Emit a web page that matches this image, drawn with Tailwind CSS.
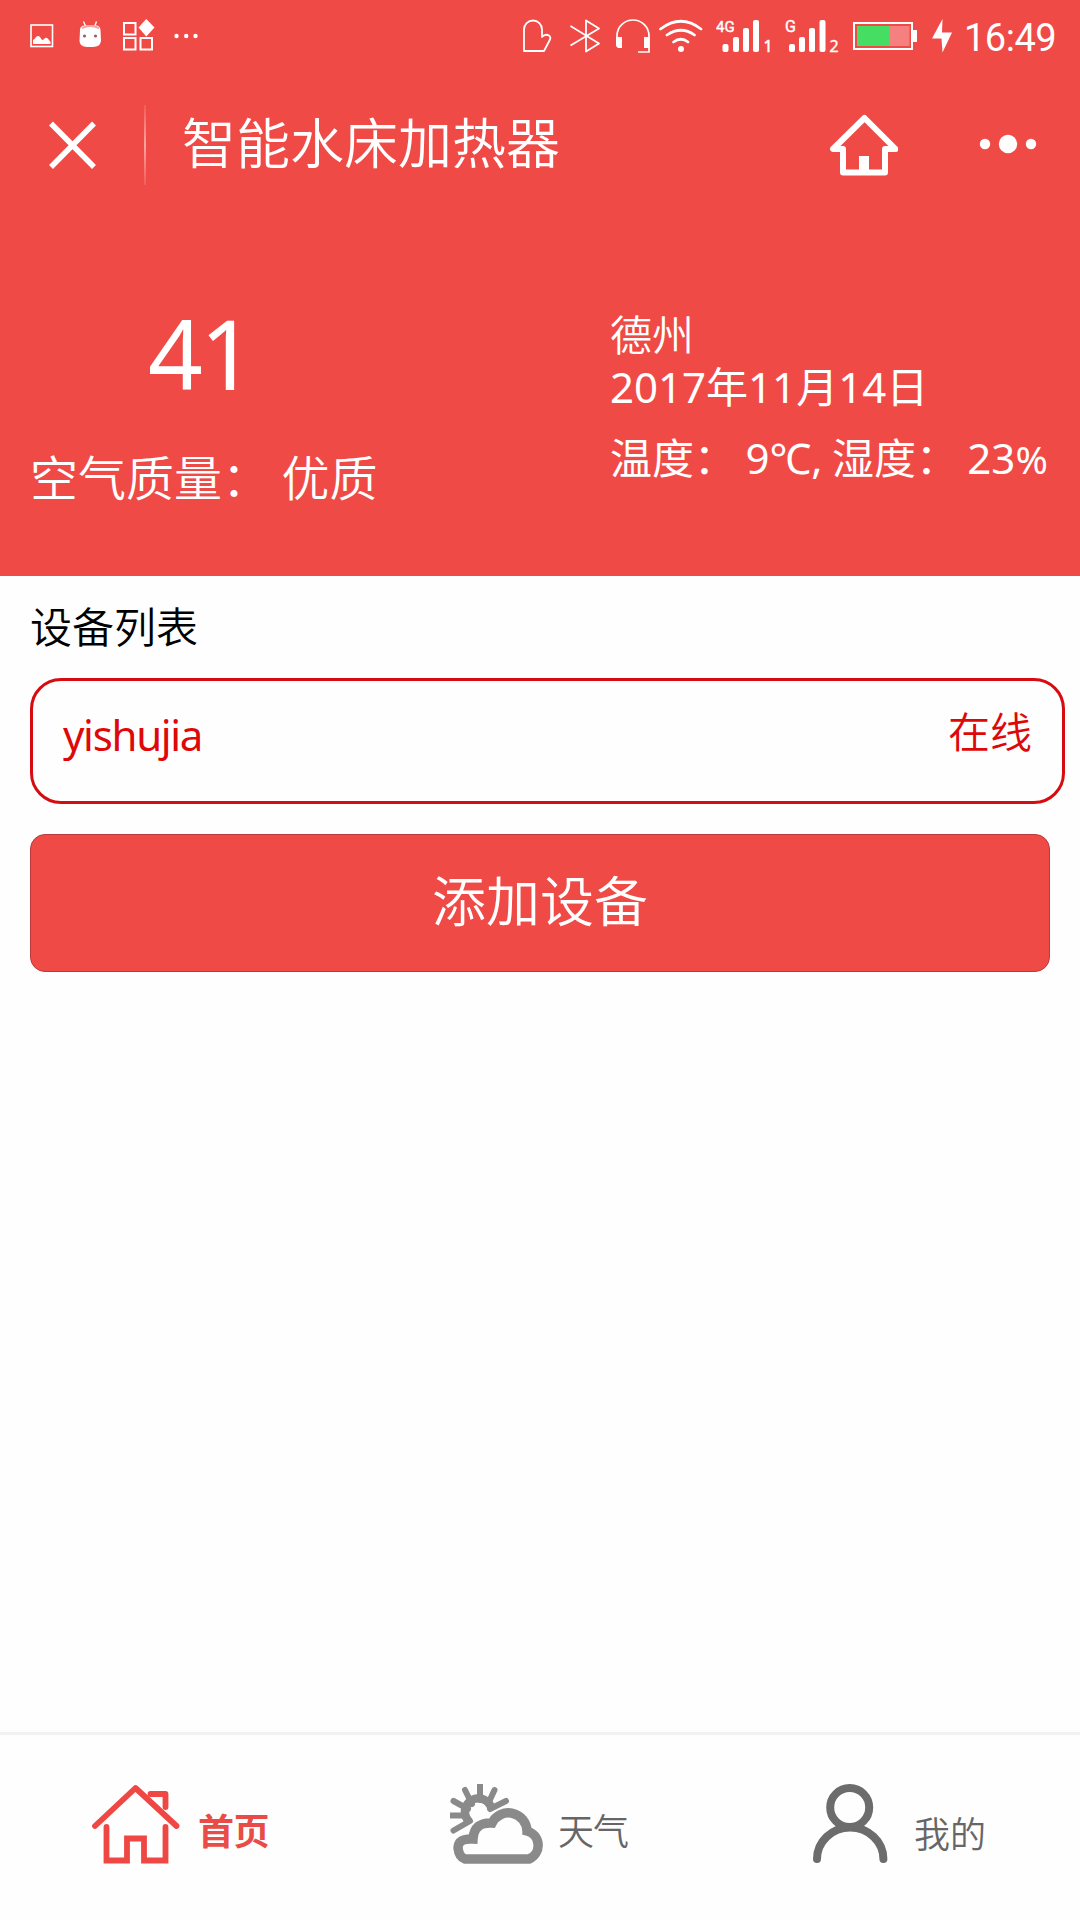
<!DOCTYPE html>
<html lang="zh-CN">
<head>
    <meta charset="UTF-8">
    <title>智能水床加热器</title>
    <script src="https://cdn.jsdelivr.net/npm/@tailwindcss/browser@4"></script>
</head>
<body class="w-[1080px] h-[1920px] bg-[#fefefe] flex flex-col overflow-hidden whitespace-nowrap font-['Noto_Sans','Noto_Sans_CJK_SC',sans-serif]">
    <header class="h-[576px] bg-[#f04a47] text-white shrink-0">
        <!-- Barre d'état -->
        <div class="h-[72px] flex items-center justify-between pl-[30px] pr-[24px]">
            <div class="flex items-center">
                <svg class="w-6 h-[72px]" viewBox="30 0 24 72" fill="none"><rect x="31" y="25" width="21.5" height="21.5" stroke="#fff" stroke-width="1.6"/><path d="M33 44V40Q35 39 36 37Q38 35 40 37L42 40Q44 40 45 38Q47 37 49 40L50.500 42V44Z" fill="#fff"/></svg>
                <svg class="w-[23px] h-[72px] ml-[25px]" viewBox="79 0 23 72"><path d="M83.500 21.500L86 27M96.500 21.500L94.500 27" stroke="#fff" stroke-width="1.300"/><path d="M80 30Q80 26 84 25.500H97Q100 26 100.500 30L101 41Q100 46 96 46.500Q90 47.500 84 46.500Q80 45.500 79.500 41Z" fill="#fff"/><path d="M82 28Q90 24 99 28" stroke="#f7a5a3" stroke-width="2" fill="none"/><circle cx="84.500" cy="36" r="1.600" fill="#96615f"/><circle cx="95.500" cy="36" r="1.600" fill="#96615f"/></svg>
                <svg class="w-8 h-[72px] ml-[21px]" viewBox="123 0 32 72"><g fill="none" stroke="#fff" stroke-width="2"><rect x="124" y="23" width="11.500" height="11.500"/><rect x="124" y="38" width="11.500" height="11.500"/><rect x="140.500" y="38" width="11.500" height="11.500"/></g><path d="M146.300 19L154.500 27.500L146.300 36.500L138.500 27.500Z" fill="#fff"/></svg>
                <svg class="w-6 h-[72px] ml-[19px]" viewBox="174 0 24 72" fill="#fff"><circle cx="176.500" cy="36" r="2.200"/><circle cx="186.200" cy="36" r="2.200"/><circle cx="195.500" cy="36" r="2.200"/></svg>
            </div>
            <div class="flex items-center">
                <svg class="w-[30px] h-[72px]" viewBox="522 0 30 72" fill="none" stroke="#fff" stroke-width="1.800" stroke-linejoin="round"><path d="M524 51V29.500A9 9 0 0 1 542 29.500V37Q545 33.500 549 35.500Q551 37 550 39.500L544 51Z"/></svg>
                <svg class="w-8 h-[72px] ml-[17px]" viewBox="569 0 32 72" fill="none" stroke="#fff" stroke-width="1.800" stroke-linejoin="round"><path d="M570.500 26L599 43.500L586 51.500V20.500L599 28.500L570.500 45.500"/></svg>
                <svg class="w-9 h-[72px] ml-[14px]" viewBox="615 0 36 72" fill="none" stroke="#fff" stroke-width="1.700"><path d="M617 42V36A16 16 0 0 1 649 36V52H638"/><path d="M616 37H622V48H618L616 46ZM644 37H649.500V48H644Z" fill="#fff" stroke="none"/></svg>
                <svg class="w-11 h-[72px] ml-[8px]" viewBox="659 0 44 72" fill="none" stroke="#fff" stroke-width="2.700" stroke-linecap="round"><path d="M660.500 29Q681 13.500 701 29M667 35Q681 25.500 694.500 35M673.500 42Q681 36.500 688 42"/><circle cx="681" cy="49" r="3" fill="#fff" stroke="none"/></svg>
                <svg class="w-14 h-[72px] ml-[13px]" viewBox="716 0 56 72" fill="#fff"><rect x="722.500" y="44" width="6" height="8" rx="2"/><rect x="733" y="37" width="6" height="15" rx="2"/><rect x="743" y="28" width="6" height="24" rx="2"/><rect x="753" y="20" width="6" height="32" rx="2"/><text x="716" y="32" class="text-[15px] font-['Roboto',sans-serif]" stroke="#fff" stroke-width=".4">4G</text><text x="763.500" y="52" class="text-[16px] font-['Noto_Sans',sans-serif]" stroke="#fff" stroke-width=".5">1</text></svg>
                <svg class="w-[54px] h-[72px] ml-[13px]" viewBox="785 0 54 72" fill="#fff"><rect x="789" y="44" width="6" height="8" rx="2"/><rect x="799" y="37" width="6" height="15" rx="2"/><rect x="809" y="28" width="6" height="24" rx="2"/><rect x="819.500" y="20" width="6" height="32" rx="2"/><text x="785" y="32" class="text-[16px] font-['Roboto',sans-serif]" stroke="#fff" stroke-width=".4">G</text><text x="829.500" y="52" class="text-[16px] font-['Noto_Sans',sans-serif]" stroke="#fff" stroke-width=".4">2</text></svg>
                <svg class="w-[65px] h-[72px] ml-[14px]" viewBox="853 0 65 72"><rect x="854" y="23" width="58" height="26" fill="none" stroke="#fff" stroke-width="2"/><rect x="857" y="26" width="33" height="20" fill="#45dd62"/><rect x="890" y="26" width="19.500" height="20" fill="#f67f80"/><rect x="912" y="30" width="5" height="12" fill="#fff"/></svg>
                <svg class="w-[22px] h-[72px] ml-[13px]" viewBox="931 0 22 72" fill="#fff"><path d="M942.500 19L932 38.500H941.500L942.500 52.500L952 32.500H942Z"/></svg>
                <span class="ml-[11px] w-[92px] text-[38px] leading-[72px] tracking-[-0.5px] pt-[3px] font-['Roboto',sans-serif]">16:49</span>
            </div>
        </div>
        <!-- Barre de titre -->
        <div class="h-[144px] flex items-center">
            <svg class="w-12 h-12 ml-[49px] mt-[2px]" viewBox="0 0 48 48" stroke="#fff" stroke-width="5.500"><path d="M2 2.500L45 46M45 2.500L2 46"/></svg>
            <div class="w-[2px] h-20 ml-[47px] mt-[2px] bg-linear-to-b from-white/10 via-white/50 to-white/10"></div>
            <h1 class="ml-[36px] text-[54px] leading-[80px] -mt-[2px] font-[350]">智能水床加热器</h1>
            <svg class="w-[68px] h-[62px] ml-auto mt-[2px]" viewBox="830 114 68 62"><path d="M864.500 118L833 149H843V172.500H885V149H895.500Z" fill="none" stroke="#fff" stroke-width="6" stroke-linejoin="round"/><path d="M859 156H869V172H859Z" fill="#fff"/></svg>
            <svg class="w-[58px] h-5 ml-[81px] mr-[43px]" viewBox="979 134 58 20" fill="#fff"><circle cx="985" cy="144" r="5.200"/><circle cx="1008" cy="144" r="9.200"/><circle cx="1031" cy="144" r="5.200"/></svg>
        </div>
        <!-- Qualité de l'air et météo -->
        <div class="flex justify-between pl-[30px] pr-[30px] pt-[89px]">
            <div>
                <div class="pl-[118px] text-[96px] leading-[96px] tracking-[-3px]">41</div>
                <div class="mt-[45px] text-[48px] leading-[60px] pt-[2px] [word-spacing:-1px] font-[350]">空气质量： 优质</div>
            </div>
            <div class="w-[440px] text-[42px] leading-[52px] pt-[4px]">
                <p class="font-[350]">德州</p>
                <p>2017年11月14日</p>
                <p class="mt-[19px] [word-spacing:-1.5px]">温度： 9℃, 湿度： 23<span class="text-[39px]">%</span></p>
            </div>
        </div>
    </header>

    <main class="flex-1 px-[30px]">
        <h2 class="pt-[23px] text-[42px] leading-[56px] text-black font-[350]">设备列表</h2>
        <div class="mt-[23px] w-[1035px] h-[126px] border-3 border-[#d70c10] rounded-[31px] flex justify-between px-[30px] text-[42px] text-[#df0808]">
            <span class="leading-[56px] pt-[26px] tracking-[-1.3px]">yishujia</span>
            <span class="leading-[56px] pt-[23px] font-[350]">在线</span>
        </div>
        <button class="mt-[30px] w-full h-[138px] bg-[#f04a47] border border-[#b83a3c] rounded-[15px] text-white text-[54px] leading-[80px] pb-[4px] font-[350]">添加设备</button>
    </main>

    <nav class="h-[188px] shrink-0 border-t-3 border-[#f2f2f2] flex text-[36px] leading-[50px] text-[#666] font-[350]">
        <a class="flex w-[360px] pl-[92px] pt-[49px] font-bold text-[#e94b47]">
            <svg class="w-[88px] h-[82px]" viewBox="92 1784 88 82" fill="none" stroke="#ee4744" stroke-width="5.800" stroke-linecap="round" stroke-linejoin="round"><path d="M95 1826L135.500 1788L176.500 1826"/><path d="M150.500 1794H165.500V1807"/><path d="M106.500 1827V1860.500H127V1838.500H144V1860.500H165.500V1827" stroke-linejoin="miter"/></svg>
            <span class="ml-[18px] pt-[23px] tracking-[-0.5px]">首页</span>
        </a>
        <a class="flex w-[360px] pl-[90px] pt-[49px]">
            <svg class="w-[94px] h-[82px]" viewBox="450 1784 94 82" fill="none" stroke="#8a8a8a"><path d="M480 1784V1800M465 1790L472 1804M494.500 1790L488 1804M453.500 1801L468 1809M506 1801L490 1809M450 1815.500H466M453.500 1830.500L470 1821" stroke-width="6" stroke-linecap="round"/><path d="M469.500 1822A13.500 13.500 0 1 1 491.500 1808.500" stroke-width="8.500"/><path d="M465 1859H529A14.800 14.800 0 0 0 527 1831A18.500 18.500 0 0 0 492 1823Q474 1822 473 1839Q458 1838 458 1848Q459 1857 465 1859Z" stroke-width="9.500"/></svg>
            <span class="ml-[14px] pt-[23px] tracking-[-1px]">天气</span>
        </a>
        <a class="flex w-[360px] pl-[92px] pt-[49px]">
            <svg class="w-[76px] h-[82px]" viewBox="812 1784 76 82" fill="none" stroke="#6c6c6c" stroke-width="8" stroke-linecap="round"><circle cx="849.700" cy="1807.500" r="19.500"/><path d="M817 1859A33.200 31.500 0 0 1 883.400 1859"/></svg>
            <span class="ml-[26px] pt-[26px]">我的</span>
        </a>
    </nav>
</body>
</html>
